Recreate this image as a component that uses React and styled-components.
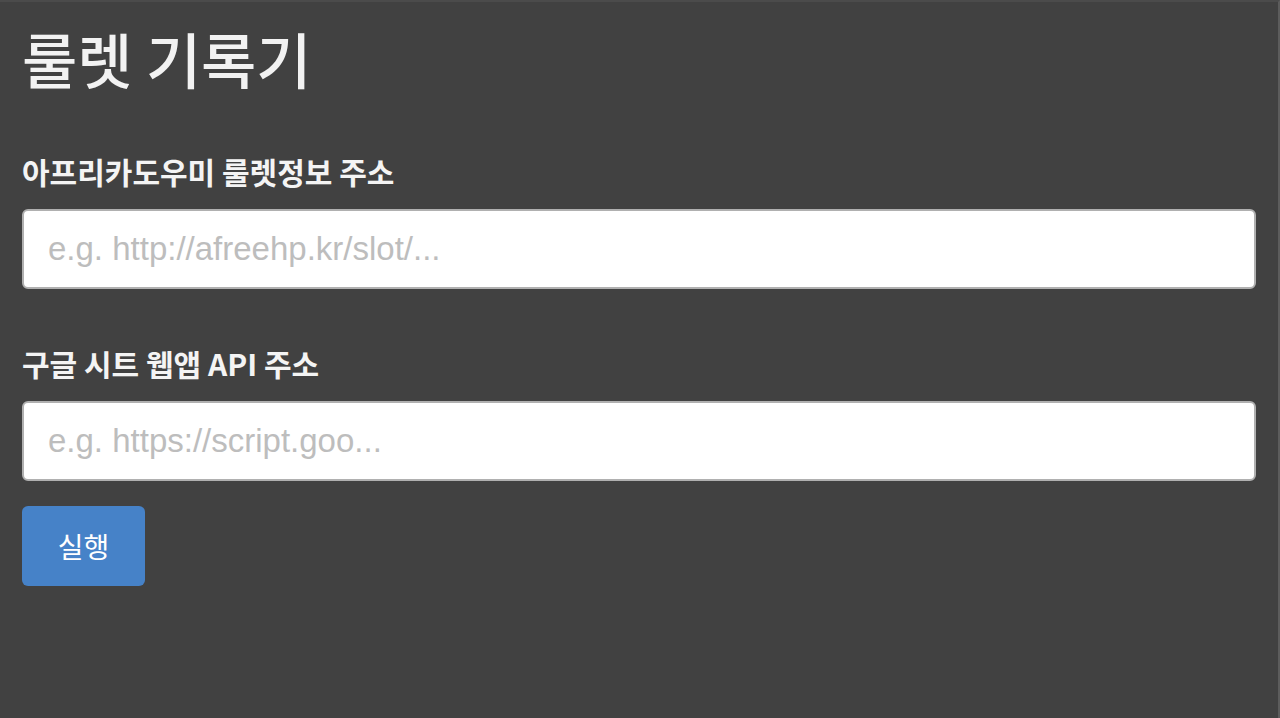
import React from "react";
import styled, { createGlobalStyle } from "styled-components";

const GlobalStyle = createGlobalStyle`
  html, body {
    margin: 0;
    padding: 0;
    background: #414141;
  }
  body {
    font-family: "Noto Sans CJK KR", "Noto Sans", sans-serif;
    color: #f2f2f2;
  }
`;

const Page = styled.div`
  box-sizing: border-box;
  min-height: 718px;
  padding: 17px 22px 40px 22px;
  border-top: 2px solid #4b4b4b;
  border-right: 2px solid #5c5c5c;
`;

const Title = styled.h1`
  margin: 0 0 55px 0;
  font-size: 60px;
  font-weight: 500;
  line-height: 1.3;
  color: #f2f2f2;
`;

const Field = styled.div`
  display: flex;
  flex-direction: column;
  margin-bottom: ${(p) => p.gap || "0"};
`;

const Label = styled.label`
  font-size: 30px;
  font-weight: 700;
  line-height: 1.3;
  margin-bottom: 18px;
  color: #f4f4f4;
`;

const Input = styled.input`
  box-sizing: border-box;
  width: 100%;
  height: 80px;
  padding: 0 24px;
  border: 2px solid #b0b0b0;
  border-radius: 6px;
  background: #ffffff;
  font-family: "Liberation Sans", "Noto Sans", sans-serif;
  font-size: 33px;
  color: #333;
  outline: none;

  &::placeholder {
    color: #bdbdbd;
  }
`;

const RunButton = styled.button`
  align-self: flex-start;
  width: 123px;
  height: 80px;
  margin-top: 25px;
  border: none;
  border-radius: 6px;
  background: #4682c8;
  color: #ffffff;
  font-family: "Noto Sans CJK KR", sans-serif;
  font-size: 28px;
  font-weight: 400;
  cursor: pointer;
`;

export default function App() {
  return (
    <>
      <GlobalStyle />
      <Page>
        <Title>룰렛 기록기</Title>
        <Field gap="55px">
          <Label>아프리카도우미 룰렛정보 주소</Label>
          <Input placeholder="e.g. http://afreehp.kr/slot/..." />
        </Field>
        <Field>
          <Label>구글 시트 웹앱 API 주소</Label>
          <Input placeholder="e.g. https://script.goo..." />
          <RunButton>실행</RunButton>
        </Field>
      </Page>
    </>
  );
}
